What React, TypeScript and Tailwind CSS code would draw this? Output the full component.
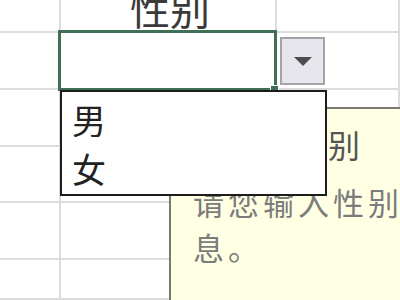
import React from 'react';

const ROWS = 6;
const COLS = 3;

export default function App() {
  const cells = [];
  for (let r = 0; r < ROWS; r++) {
    for (let c = 0; c < COLS; c++) {
      cells.push(
        <div
          key={`${r}-${c}`}
          className="border-r-2 border-b-2 border-[#dcdcdc] bg-white flex items-end justify-center overflow-visible"
        >
          {r === 0 && c === 1 && (
            <span className="text-[40px] leading-[40px] text-[#3a3a3a] pb-[3px] pl-[4px]">性别</span>
          )}
        </div>,
      );
    }
  }

  return (
    <div
      className="relative w-[400px] h-[300px] overflow-hidden bg-white"
      style={{ fontFamily: '"Noto Sans CJK SC", "Noto Sans", sans-serif' }}
    >
      {/* sheet grid */}
      <div className="grid h-full grid-cols-[61px_216px_1fr] grid-rows-[33px_57px_57px_56px_57px_1fr]">
        {cells}
      </div>

      {/* active cell */}
      <div className="absolute left-[58px] top-[30px] w-[219px] h-[61px] border-[3px] border-[#3f7055]" />
      <div className="absolute left-[270px] top-[85px] w-[9px] h-[7px] bg-[#3f7055] border border-white" />

      {/* dropdown arrow button */}
      <div className="absolute left-[280px] top-[37px] w-[45px] h-[48px] bg-[#e6e6ec] border-2 border-[#a3a3a8] flex items-center justify-center">
        <svg width="20" height="11" viewBox="0 0 20 11">
          <path d="M1 1 L19 1 L10 10 Z" fill="#4e4e52" />
        </svg>
      </div>

      {/* input message */}
      <div className="absolute left-[169px] top-[107px] w-[260px] h-[220px] border-2 border-[#78786e] bg-[#ffffe4] text-[#5a5a5a]">
        <div className="pt-[15px] pl-[125px] text-[32px] leading-[40px] text-[#555555]">性别</div>
        <div className="mt-[15px] pl-[22px] w-[272px] text-[31px] leading-[45px] tracking-[4px] text-[#7c7c7c]">
          请您输入性别信息。
        </div>
      </div>

      {/* validation list */}
      <div className="absolute left-[60px] top-[90px] w-[267px] h-[106px] border-2 border-[#1c1c1c] bg-white pt-[3px] pl-[10px] text-[34px] leading-[49px] text-[#222222]">
        <div>男</div>
        <div>女</div>
      </div>
    </div>
  );
}
